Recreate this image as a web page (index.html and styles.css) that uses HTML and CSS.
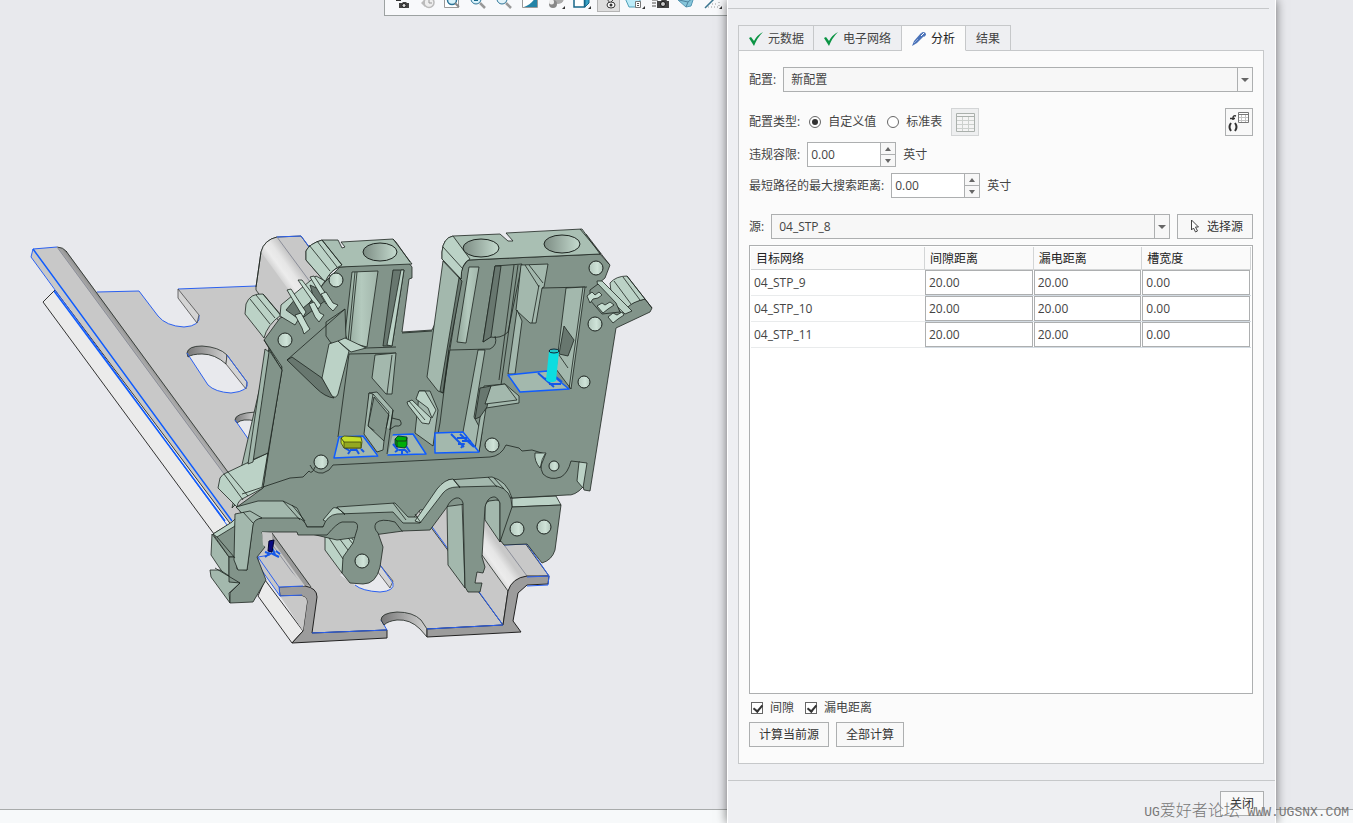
FILE: index.html
```html
<!DOCTYPE html>
<html lang="zh-CN">

<head>
    <meta charset="UTF-8">
    <meta name="viewport" content="width=device-width, initial-scale=1.0">
    <title>分析</title>
    <link rel="stylesheet" href="styles.css">
</head>

<body>
    <main class="canvas">
        <div class="toolbar">
            <button class="tool" aria-label="视图管理器"><svg viewBox="0 0 26 12"><path d="M6 0h5v1H6z" fill="#333"/><path d="M9 3h3l1-1h3l1 1h2v5H9z" fill="#444"/><circle cx="14" cy="5.500" r="2" fill="#ddd" stroke="#222"/></svg></button>
            <button class="tool" aria-label="上一视图"><svg viewBox="0 0 26 12"><circle cx="13" cy="2.500" r="5" fill="#eee" stroke="#bbb" stroke-width="1.500"/><path d="M13 0v3h3" fill="none" stroke="#999"/><path d="M5 3l4-4v8z" fill="#bbb"/></svg></button>
            <button class="tool" aria-label="重新调整"><svg viewBox="0 0 26 12"><path d="M2.500 0v7.500h14V0" fill="#fff" stroke="#999"/><circle cx="10" cy="0" r="4.500" fill="#d9f2fa" stroke="#2b7397" stroke-width="1.500"/><path d="M13 3l4 4" stroke="#888" stroke-width="2"/></svg></button>
            <button class="tool" aria-label="放大"><svg viewBox="0 0 26 12"><circle cx="8" cy="-1" r="5" fill="#d9f2fa" stroke="#2b7397" stroke-width="1"/><path d="M6 0h4" stroke="#176789" stroke-width="2"/><path d="M12 3l5 5" stroke="#999" stroke-width="2.500"/></svg></button>
            <button class="tool" aria-label="缩小"><svg viewBox="0 0 26 12"><circle cx="8" cy="-1" r="5" fill="#e3f4fa" stroke="#2b7397" stroke-width="1"/><path d="M12 3l5 5" stroke="#999" stroke-width="2.500"/></svg></button>
            <button class="tool" aria-label="重画"><svg viewBox="0 0 26 12"><path d="M2.500-6.500h15v14h-15z" fill="#fff" stroke="#999"/><path d="M17-6v13H4q9-3 13-13" fill="#2383a6"/></svg></button>
            <button class="tool" aria-label="着色"><svg viewBox="0 0 26 12"><circle cx="12" cy="-2" r="6" fill="#aaa"/><circle cx="7" cy="4" r="4" fill="#888"/><circle cx="5.500" cy="2" r="2.500" fill="#eee"/><path d="M16 9h3V6z" fill="#333"/></svg></button>
            <button class="tool" aria-label="显示样式"><svg viewBox="0 0 26 12"><path d="M3-4h9.500V7H2V-4" fill="#fff" stroke="#176789" stroke-width="1.500"/><path d="M13-4h4V3l-4 4z" fill="#38a2c5" stroke="#176789"/><path d="M16 9h3V6z" fill="#333"/></svg></button>
            <button class="tool pressed" aria-label="注释显示"><svg viewBox="0 0 26 12"><path d="M11-1l3 4M18-1l-3 3" stroke="#444"/><ellipse cx="15" cy="5" rx="4" ry="3" fill="#fff" stroke="#333"/><circle cx="15" cy="5" r="1.500" fill="#333"/></svg></button>
            <button class="tool" aria-label="外观"><svg viewBox="0 0 26 12"><path d="M1-2h15v5l-4 4H5z" fill="#bcecf9" stroke="#4e9eb8"/><path d="M11.500 1.500h5v6h-5z" fill="#fff" stroke="#777"/><path d="M13 3.500h2M13 5.500h2" stroke="#555"/><path d="M18 9h3V6z" fill="#333"/></svg></button>
            <button class="tool" aria-label="捕获"><svg viewBox="0 0 26 12"><path d="M2 0h6M2 3h4M2 6h4" stroke="#888" stroke-width="1.500"/><path d="M7 1h4l1-2h4l1 2h2v7H7z" fill="#444"/><circle cx="13" cy="4" r="2.500" fill="#ccc" stroke="#111"/></svg></button>
            <button class="tool" aria-label="截面"><svg viewBox="0 0 26 12"><path d="M2 0l8-3h8l-3 9-5 1z" fill="#86c5da" stroke="#5599b5"/><path d="M3 0l9 2 6-5M12 2l-2 5" stroke="#4d839e" fill="none"/></svg></button>
            <button class="tool" aria-label="基准显示"><svg viewBox="0 0 26 12"><path d="M3 8L14-3" stroke="#39758f" stroke-width="1.500"/><path d="M6 7h11V-2M10 4h6" stroke="#999" fill="none" stroke-dasharray="1 2"/><path d="M17 9h3V6z" fill="#333"/></svg></button>
        </div>

        <svg class="model" viewBox="0 16 727 793" preserveAspectRatio="xMinYMin meet" role="img" aria-label="端子模型">
            <defs>
                <linearGradient id="fillet" gradientUnits="userSpaceOnUse" x1="260" y1="253" x2="278" y2="240">
                    <stop offset="0" stop-color="#cfcfcf"/><stop offset="0.350" stop-color="#ececec"/><stop offset="0.650" stop-color="#e6e6e6"/><stop offset="1" stop-color="#c8c8c8"/>
                </linearGradient>
                <linearGradient id="edge" gradientUnits="userSpaceOnUse" x1="57" y1="252" x2="65" y2="246">
                    <stop offset="0" stop-color="#b8b8b8"/><stop offset="1" stop-color="#858585"/>
                </linearGradient>
                <linearGradient id="hole" x1="0" x2="1">
                    <stop offset="0" stop-color="#7d8d84"/><stop offset="1" stop-color="#c5dbcf"/>
                </linearGradient>
                <linearGradient id="peg" x1="0" x2="1">
                    <stop offset="0" stop-color="#b3c8bd"/><stop offset="0.600" stop-color="#cfe3d8"/><stop offset="1" stop-color="#b0c5ba"/>
                </linearGradient>
                <linearGradient id="wall" x1="0" x2="1">
                    <stop offset="0" stop-color="#777"/><stop offset="1" stop-color="#d2d2d2"/>
                </linearGradient>
                <linearGradient id="bore" x1="0" x2="1">
                    <stop offset="0" stop-color="#91a69a"/><stop offset="0.500" stop-color="#b4cabe"/><stop offset="1" stop-color="#a1b5aa"/>
                </linearGradient>
            </defs>

            <!-- rail: base plate -->
            <path class="plate" d="M97 292L139 291L158 316Q166 326 184 327Q201 326 199 315L178 289L256 286L420 506L503 625L427 629L421 620Q413 612 397 612Q381 613 381 620L387 630L312 633L225 525L66 315Z"/>
            <path class="blue" d="M97 292L139 291L158 316Q166 326 184 327Q201 326 199 315M178 289L256 286M430 524L503 625L427 629M387 630L312 633M381 620L387 630"/>
            <path class="rim" d="M178 289L199 315L197 323L178 298Z"/>
            <path class="gap" d="M187 353Q188 346 202 346Q219 347 227 355L247 382Q250 391 231 393Q215 392 208 385Z"/>
            <path class="ink" fill="url(#wall)" d="M187 353Q188 346 202 346Q219 347 227 355L226 364Q215 354 202 354Q192 354 188 357Z"/>
            <path class="rim" d="M227 355L247 382L246 389L226 364Z"/>
            <path class="blue" d="M187 353L208 385Q215 392 231 393Q250 391 247 382L227 355"/>
            <path class="gap" d="M235 420Q235 413 253 412L258 440L249 440Z"/>
            <path class="ink" fill="url(#wall)" d="M235 420Q235 413 256 412V421Q242 418 237 423Z"/>
            <path class="blue" d="M235 420L249 440"/>
            <path class="gap" d="M340 575L370 560L380 565L393 583Q395 591 380 592Q362 591 355 585Z"/>
            <path class="rim" d="M374 567L380 565L393 581L390 588Z"/>
            <path class="blue" d="M380 565L393 583Q395 591 380 592Q362 591 355 585"/>
            <path class="ink" fill="url(#wall)" d="M381 620Q381 613 397 612Q413 612 421 620L427 629V637L420 629Q410 619 397 620Q388 621 384 625Z"/>

            <!-- rail: left flange -->
            <path class="pale" d="M43 302L55 290L232 526L214 534Z"/>
            <path class="pale" d="M258 596L265 580L303 631L292 643Z"/>
            <path class="flange" d="M33 249L57 247Q63 247 67 252L308 584L305 586L279 587L31 257Z"/>
            <path fill="url(#edge)" d="M57 247Q63 247 67 252L236 483L228 480Z"/>
            <path class="shade" d="M268 535L272 533L310 585L305 586Z"/>
            <path class="ink-line" d="M57 247Q63 247 67 252M66 251L236 483M272 533L311 587"/>
            <path class="soft" d="M57 247L230 482M266 536L303 587"/>
            <path class="blue" d="M57 247L33 249L31 257L227 525"/>
            <path class="blue bold" d="M33 249L232 521M54 291L225 521"/>
            <path class="front" d="M279 587L305 586Q317 588 317 597L312 633L387 630V638L292 643L303 631L307 602Q307 597 302 596H280Z"/>
            <path class="flange" d="M280 596H302Q307 597 307 602L303 631Z"/>
            <path class="flange" d="M258 557L273 553L305 586L279 587L280 596L258 564Z"/>
            <path class="blue" d="M258 557L279 587L303 586M279 587L280 596M258 557V565L280 596L302 595M258 557L270 555M312 633L387 630"/>

            <!-- rail: right flange -->
            <path class="flange ink" d="M256 287L261 252Q264 240 277 237L301 236L549 576L527 577L508 591L503 625L256 290Z"/>
            <path fill="url(#fillet)" d="M261 252Q264 240 277 237L527 576Q512 580 508 591Z"/>
            <path class="soft" d="M277 237L527 576"/>
            <path class="ink-line" d="M256 287L261 252Q264 240 277 237M482 555L508 591"/>
            <path class="blue" d="M277 237L301 236L310 248M430 524L503 625"/>
            <path class="front" d="M549 576L548 584L527 585L518 593L513 621L521 632L427 637V629L503 625L508 591Q512 578 527 576Z"/>
            <path class="blue" d="M504 545L527 544L549 576L548 585L527 586M549 576L527 577M427 629L503 625"/>

            <!-- foot: rear surfaces -->
            <path class="light" d="M512 498L556 496L561 505L512 507Z"/>
            <path class="body" d="M500 504L512 507L561 505L555 550Q552 560 542 563L527 544L504 545L500 540Z"/>
            <path class="mid" d="M447 507Q452 497 462 501L465 588L448 565Z"/>
            <path class="mid" d="M485 520V505Q490 496 500 501V542Z"/>
            <path class="light" d="M325 535L340 521L360 523L356 540L345 558L342 573L325 550Z"/>
            <path class="ink-line" d="M337 524L353 544M333 530L348 550M329 538L343 559M342 522L353 540M348 522L356 533"/>

            <!-- main body -->
            <path class="mid" d="M269 348L276 352L282 367L240 500L232 508Z"/>
            <path class="body" d="M264 340L280 318L302 310L325 282L340 267L408 262L412 267L412 278L409 279L402 332L432 330L462 268L468 260L600 254L610 265L605 278L598 284L622 314Q625 303 645 299L652 308L650 312L616 328L590 491L584 490L583 487Q575 496 567 495L512 498L420 510L403 531L337 540L265 523L237 507L263 488L282 367Z"/>
            <path class="light" d="M220 478Q222 474 228 472L268 453L263 488L244 498Q238 500 237 507L218 488Z"/>
            <path class="ink-line" d="M224 474L243 500M228 472L248 496M237 507L242 514M242 494L290 478L303 477L309 471Q312 475 315 467L325 458M262 487L282 370L264 340"/>
            <path class="body" d="M252 460L268 453L282 370L269 350Z"/>
            <path class="mid" d="M265 349L269 352L253 462L248 464Z"/>

            <!-- foot bracket -->
            <path class="mid" d="M236 507L258 501H283L297 508L307 527L323 527L337 507L395 503L408 517H421L448 480L492 477Q507 481 512 498L497 490L457 490L420 528L403 526L393 514L337 517L323 530H307L298 520H262L252 524Z"/>
            <path class="light" d="M323 520L333 508Q336 506 345 514L331 524Z"/>
            <path class="light" d="M415 521L437 489Q445 479 453 479L460 487Q449 489 443 495L421 523Z"/>
            <path class="mid" d="M212 534L229 557V582L211 555Z"/>
            <path class="mid" d="M210 570H220L240 583L229 593L230 603L211 577Z"/>
            <path class="body" d="M213 534L236 520V557H229Z"/>
            <path class="light" d="M213 534L232 522L236 518L235 526L217 537Z"/>
            <path class="body" d="M247 570L253 523Q256 518 262 518H298Q304 519 307 527H323Q327 515 337 514L393 512L403 523H420L443 493Q448 487 457 487L497 486Q512 490 512 507L500 542V503Q497 496 493 497Q487 498 485 507L482 557L485 567L483 573L477 572L475 583L482 583L480 592H468L465 587L463 503Q461 497 456 498Q450 500 447 507L430 530L402 531L395 522Q381 518 376 523Q373 528 378 533L383 547L380 567Q376 584 363 584L350 583L342 573L343 557L353 543L356 533Q360 523 354 522H342Q337 523 327 535H298L297 532H262L265 547L257 557L266 580L253 602L230 603V593L240 583L229 582V557L236 557L237 569Z"/>
            <path class="mid" d="M235 514L250 511L262 518Q254 519 253 525L247 570H238L234 560Z"/>
            <path class="ink-line" d="M217 537L235 558M215 568L240 583M283 501L300 520M292 505L305 521M337 507L345 515M393 503L406 520M453 479L460 488M488 477L497 487M494 478L504 489M415 514L421 523M243 512L253 523"/>
            <path class="flange" d="M262 532L272 533L273 553L263 545Z"/>

            <!-- left tower -->
            <path class="top" d="M306 251Q309 244 322 240L338 240L342 248L345 247L341 242L393 239L412 264L340 267Q330 270 325 282L306 260Z"/>
            <path class="light" d="M306 251Q309 244 322 240L342 265Q330 270 325 282L306 260Z"/>
            <path class="ink-line" d="M309 245L330 271M317 241L337 267M322 240L342 265M393 239L396 242L410 262"/>
            <path class="light" d="M246 304Q250 293 263 294L281 315Q267 325 264 338L245 314Z"/>
            <path class="ink-line" d="M250 299L270 324M256 295L275 318M263 294L282 317"/>
            <path class="light" d="M281 305L316 276L325 281L303 312L295 325L280 316Z"/>
            <path class="deep" d="M286 310L296 298L303 308L314 299L310 285L325 292L326 300L300 320Z"/>
            <path class="pin" d="M287 290l4-1 15 23-3 5zM298 280l4 0 19 25-3 4zM310 277l4-1 16 24-4 4z"/>
            <path class="pin" d="M295 315l6-2 7 13 2 3-6 5-2-6zM309 304l5-2 6 11 4 2-5 7-4-5zM321 294l5-2 7 11 5 2-5 6-5-5z"/>
            <path class="bore" d="M352 272L378 271L367 347L348 342L345 334Z"/>
            <path class="ink-line" d="M355 272L348 342M357 272L350 343"/>
            <path class="deep" d="M393 270L404 270L392 346L383 346Z"/>
            <path class="light" d="M401 270L404 270L392 346L387 345Z"/>
            <path class="body" d="M326 322L345 309L346 338Q340 346 331 343L326 336Z"/>
            <path class="deep" d="M287 360L292 357L322 378L334 398Q325 397 316 388Z"/>
            <path class="light" d="M329 344L338 341L349 351L338 394Q336 399 332 396L322 378Z"/>
            <path class="light" d="M338 341L345 338L366 348L351 352Z"/>
            <path class="ink-line" d="M366 348L396 347M349 354L396 353M349 354L338 437M287 360L345 309"/>
            <path class="mid" d="M375 355L396 353L392 394L386 394L372 378Z"/>
            <path class="ink-line" d="M392 355L387 394"/>
            <path class="mid" d="M369 393L377 392L393 410L388 440L380 448L366 433Z"/>
            <path class="body" d="M374 397L389 415L384 438L368 426Z"/>
            <path class="ink-line" d="M392 418L400 420Q404 427 395 426L389 430"/>
            <path class="mid" d="M419 391L430 391L438 410L433 446L415 433L418 405Z"/>
            <path class="light" d="M407 402L412 400L431 418L429 424L422 423L408 405ZM419 391L425 391L436 410L432 418L428 408L416 399Z"/>
            <path class="ink-line" d="M409 401L425 420"/>

            <!-- right tower -->
            <path class="top" d="M442 252Q443 238 453 236L500 234L508 241H513L506 233L582 229L600 254L468 260Q461 263 461 279L442 259Z"/>
            <path class="light" d="M442 252Q443 238 453 236L470 259Q461 263 461 279L442 259Z"/>
            <path class="ink-line" d="M443 247L463 269M580 229L601 254M586 234L609 264"/>
            <path class="mid" d="M443 261L461 280L443 393L438 391L427 377Z"/>
            <path class="deep" d="M459 278L462 281L449 349L443 393L440 391Z"/>
            <path class="bore" d="M469 267L479 267L466 343L457 342Z"/>
            <path class="body" d="M495 266L522 264L508 332Q501 339 490 337L483 342Z"/>
            <path class="deep" d="M495 266L501 266L491 337L483 342Z"/>
            <path class="ink-line" d="M518 265L500 392M514 265L499 380M450 350L490 349Q498 345 495 336"/>
            <path class="mid" d="M521 265L548 264L544 287L542 288L536 323H530L516 310Z"/>
            <path class="ink-line" d="M525 265L539 287M529 265L543 283M539 285L532 323M542 288L587 287"/>
            <path class="mid" d="M566 288L585 287L571 389L556 369Z"/>
            <path class="deep" d="M564 326L574 340L568 356L559 354Z"/>
            <path class="ink-line" d="M583 287L569 389M559 355L568 368"/>
            <path class="mid" d="M517 310L522 321L515 374H508Z"/>
            <path class="mid" d="M478 350L485 350L474 417L482 432L479 452L463 432Z"/>
            <path class="mid" d="M484 386L505 384L519 396V403L486 408L479 452L475 449L482 405Z"/>
            <path class="deep" d="M480 388L491 386L487 407L480 417L475 419Z"/>
            <path class="mid" d="M491 386L505 384L517 400L485 404Z"/>
            <path class="ink-line" d="M449 350L440 423L435 450M402 333L432 331"/>

            <!-- right clip -->
            <path class="light" d="M610 283Q616 276 627 276L645 299Q632 302 627 308L622 314L612 300Z"/>
            <path class="ink-line" d="M614 281L631 304M623 277L640 300M627 276L645 299L652 308"/>
            <path class="light" d="M597 281L602 281L632 311L625 314L598 288Z"/>
            <path class="body" d="M590 290L598 284L616 303L620 312L602 314L590 300Z"/>
            <path class="pin" d="M587 296l5-4 3 3 4-3 3 3-4 3-5 1-3 4zM597 306l5-3 3 2 5-3 4 3-6 4-5 4zM608 317l5-4 4 2 5-3 2 3-6 4-5 4z"/>

            <!-- contact pads -->
            <path class="pad" d="M339 437L363 436L378 456L334 458Z"/>
            <path class="pad" d="M390 435L413 434L426 454L387 455Z"/>
            <path class="pad" d="M435 433L463 432L479 452L435 453Z"/>
            <path class="pad" d="M508 375L547 371L569 389L520 392Z"/>
            <path class="body plain" d="M366 432L388 428L393 434L387 457H379Z"/>
            <path class="mid" d="M369 393L373 394L368 426L384 441L383 450L377 452L364 434Z"/>
            <path class="ink-line" d="M393 410L387 454M373 394L389 412L384 441"/>
            <path class="marks" d="M345 448l5 3-2 3M350 450h6M356 449l3 5M361 449l3 3"/>
            <path class="marks" d="M393 444l5 6-3 2M399 450h6l3 3M406 446l4 6M402 449v5"/>
            <path class="marks" d="M451 434l13 13M460 434l14 13M457 438h10M462 441h9M458 444h6l-3 4"/>
            <path class="marks" d="M538 373l16 14M546 379h10M549 384h12M556 377l6 5M543 378l7 2"/>
            <path class="marks" d="M265 552l6 2M271 553l8 4M272 548l3 6M276 551l4 3M265 557l4-3"/>
            <path class="yellow" d="M341 438L344 436L361 437L362 442L361 448H344L341 443Z"/>
            <path class="yellow dark" d="M344 442H361V448H344Z"/>
            <path class="ink-line" d="M341 438L344 442"/>
            <path class="green" d="M395 439L398 436L407 437V445L405 448L397 447L395 444Z"/>
            <path class="ink-line" d="M395 439L397 441H406L407 438M397 441V447"/>
            <path class="cyan" d="M549 351H559L556 381Q550 384 546 380Z"/>
            <ellipse class="cyan-top" cx="554" cy="351" rx="5" ry="2"/>
            <path class="navy" d="M269 541L274 540L272 552L268 551Z"/>

            <!-- lower edge of the housing -->
            <path class="ink-line" d="M310 465Q314 474 323 473Q330 471 333 465L490 457Q501 456 506 445L519 448L522 451L532 450L545 454"/>
            <path class="light" d="M535 453L546 453L542 463L540 468Q534 461 535 453Z"/>
            <path class="ink-line" d="M545 454Q538 465 543 474Q550 481 561 477Q568 473 571 461L580 462"/>
            <path class="light" d="M579 462L587 463L583 488L577 481Z"/>

            <!-- bores -->
            <g class="bores">
                <ellipse cx="380" cy="252" rx="17" ry="9"/>
                <ellipse cx="481" cy="248" rx="18" ry="9"/>
                <ellipse cx="562" cy="244" rx="18" ry="9"/>
                <circle cx="336" cy="280" r="7"/>
                <circle cx="285" cy="340" r="7"/>
                <circle cx="321" cy="462" r="7"/>
                <circle cx="596" cy="268" r="7"/>
                <circle cx="595" cy="324" r="7"/>
                <circle cx="584" cy="382" r="6"/>
                <circle cx="492" cy="445" r="7"/>
                <circle cx="554" cy="466" r="5"/>
                <circle cx="362" cy="561" r="7"/>
                <circle cx="517" cy="529" r="7"/>
                <circle cx="544" cy="527" r="7"/>
            </g>
        </svg>
    </main>

    <footer class="statusbar"></footer>

    <section class="dialog">
        <div class="tabs" role="tablist">
            <button class="tab" role="tab"><svg class="tab-icon" viewBox="0 0 14 14"><path d="M0 6l2-1 3 4Q8 3 14 0 8 6 5 14z" fill="#0b9444"/></svg>元数据</button>
            <button class="tab" role="tab"><svg class="tab-icon" viewBox="0 0 14 14"><path d="M0 6l2-1 3 4Q8 3 14 0 8 6 5 14z" fill="#0b9444"/></svg>电子网络</button>
            <button class="tab active" role="tab" aria-selected="true"><svg class="tab-icon" viewBox="0 0 14 14"><path d="M0 14l2-5L9 1l3 3-7 7z" fill="#4a72b8"/><path d="M9 1l2-1q3 0 3 3l-2 2z" fill="#4a72b8"/><path d="M9 4l3-3" stroke="#fff"/><path d="M2 11l4-4" stroke="#8ca8d8"/></svg>分析</button>
            <button class="tab" role="tab">结果</button>
        </div>

        <div class="panel">
            <div class="row">
                <label for="config">配置:</label>
                <div class="dropdown">
                    <select id="config"><option>新配置</option></select>
                </div>
            </div>

            <div class="row type-row">
                <span class="type-label">配置类型:</span>
                <input type="radio" name="type" id="custom" checked>
                <label for="custom">自定义值</label>
                <input type="radio" name="type" id="standard">
                <label for="standard">标准表</label>
                <button class="icon-button disabled" disabled aria-label="表"><svg viewBox="0 0 26 26"><path d="M4.500 4.500h18v18h-18z" fill="#f4f4f4" stroke="#aab0ac"/><path d="M5 7.500h17" stroke="#aab0ac"/><path d="M5 11.500h17M5 15.500h17M5 19.500h17M10.500 8v14M16.500 8v14" stroke="#ccd0cd"/></svg></button>
                <button class="icon-button formula" aria-label="公式"><svg viewBox="0 0 26 26"><path d="M12.500 3.500h10v10h-10z" fill="#fff" stroke="#777"/><path d="M13 5.500h9" stroke="#777"/><path d="M13 8.500h9M13 11.500h9M15.500 6v7M19.500 6v7" stroke="#c4c4c4"/><path d="M10 7q-3-1-3 2v2M4 9.500h5" stroke="#333" stroke-width="1.500" fill="none"/><path d="M5 14q-3 4 0 8M9 14q3 4 0 8" stroke="#333" stroke-width="2" fill="none"/></svg></button>
            </div>

            <div class="row">
                <label for="tolerance">违规容限:</label>
                <div class="spinner">
                    <input type="text" id="tolerance" value="0.00">
                    <div class="arrows"><button class="up" aria-label="增加"></button><button class="down" aria-label="减少"></button></div>
                </div>
                <span>英寸</span>
            </div>

            <div class="row distance-row">
                <label for="distance">最短路径的最大搜索距离:</label>
                <div class="spinner">
                    <input type="text" id="distance" value="0.00">
                    <div class="arrows"><button class="up" aria-label="增加"></button><button class="down" aria-label="减少"></button></div>
                </div>
                <span>英寸</span>
            </div>

            <div class="row source-row">
                <label for="source">源:</label>
                <div class="dropdown">
                    <select id="source"><option>04_STP_8</option></select>
                </div>
                <button class="button pick"><svg viewBox="0 0 10 15"><path d="M1.500 1v10l2-2 2 4 2-1-2-4h3z" fill="#fff" stroke="#444"/></svg>选择源</button>
            </div>

            <div class="table-box">
                <table>
                    <thead>
                        <tr><th class="net">目标网络</th><th>间隙距离</th><th>漏电距离</th><th>槽宽度</th></tr>
                    </thead>
                    <tbody>
                        <tr>
                            <td>04_STP_9</td>
                            <td><input type="text" value="20.00" aria-label="间隙距离"></td>
                            <td><input type="text" value="20.00" aria-label="漏电距离"></td>
                            <td><input type="text" value="0.00" aria-label="槽宽度"></td>
                        </tr>
                        <tr>
                            <td>04_STP_10</td>
                            <td><input type="text" value="20.00" aria-label="间隙距离"></td>
                            <td><input type="text" value="20.00" aria-label="漏电距离"></td>
                            <td><input type="text" value="0.00" aria-label="槽宽度"></td>
                        </tr>
                        <tr>
                            <td>04_STP_11</td>
                            <td><input type="text" value="20.00" aria-label="间隙距离"></td>
                            <td><input type="text" value="20.00" aria-label="漏电距离"></td>
                            <td><input type="text" value="0.00" aria-label="槽宽度"></td>
                        </tr>
                    </tbody>
                </table>
            </div>

            <div class="checks">
                <input type="checkbox" id="clearance" checked>
                <label for="clearance">间隙</label>
                <input type="checkbox" id="creepage" checked>
                <label for="creepage">漏电距离</label>
            </div>

            <div class="actions">
                <button class="button">计算当前源</button>
                <button class="button">全部计算</button>
            </div>
        </div>

        <div class="dialog-footer">
            <button class="button">关闭</button>
        </div>
    </section>

    <div class="watermark">UG<span>爱好者论坛</span> WWW.UGSNX.COM</div>
</body>

</html>
```
FILE: styles.css
```css
* {
    box-sizing: border-box;
}

body {
    margin: 0;
    height: 100vh;
    display: grid;
    grid-template-columns: minmax(0, 1fr) 549px 77px;
    grid-template-rows: minmax(0, 1fr) 14px;
    overflow: hidden;
    background-color: #e8e9ed;
    color: #444;
    font-family: "Open Sans", "Noto Sans CJK SC", sans-serif;
    font-size: 12px;
    line-height: 16px;
}

button,
input,
select {
    margin: 0;
    padding: 0;
    font: inherit;
    color: inherit;
}

/* 3D view */
.canvas {
    grid-area: 1 / 1;
    display: flex;
    flex-direction: column;
    min-height: 0;
}

.toolbar {
    align-self: flex-end;
    display: flex;
    width: 343px;
    height: 16px;
    padding-left: 5px;
    border: solid #9da2a2;
    border-width: 0 0 1px 1px;
    background-color: #f8f9fb;
    overflow: hidden;
}

.tool {
    flex: 0 0 26px;
    height: 12px;
    border: none;
    background: none;
}

.tool svg {
    display: block;
    width: 26px;
    height: 12px;
}

.tool.pressed {
    flex-basis: 23px;
    margin: 0 3px 0 -1px;
    border: 1px solid #b4b4b4;
    border-top: none;
    background-color: #dedede;
    overflow: hidden;
}

.tool.pressed + .tool {
    margin-left: 1px;
}

.tool.pressed svg {
    margin-left: -2px;
}

.model {
    flex: 1;
    width: 100%;
    min-height: 0;
}

.model path,
.model ellipse,
.model circle {
    stroke-linejoin: round;
}

.plate,
.flange {
    fill: #c8c8c8;
}

.pale {
    fill: #ebebeb;
    stroke: #333;
    stroke-width: 1;
}

.front {
    fill: #9c9c9c;
    stroke: #222;
}

.shade {
    fill: #9a9a9a;
}

.gap {
    fill: #e8e9ed;
}

.rim {
    fill: #d4d4d4;
    stroke: #333;
    stroke-width: 0.7;
}

.ink,
.ink-line {
    stroke: #1d2420;
    stroke-width: 0.8;
}

.ink-line,
.soft,
.blue,
.marks {
    fill: none;
}

.soft {
    stroke: #8b8e99;
}

.blue {
    stroke: #2b60f0;
}

.blue.bold {
    stroke: #0f5cff;
    stroke-width: 1.5;
}

.marks {
    stroke: #1458e8;
    stroke-width: 2;
}

.body,
.mid,
.light,
.top,
.deep,
.bore,
.pin {
    stroke: #1d2420;
    stroke-width: 0.8;
}

.body {
    fill: #82948a;
}

.body.plain {
    stroke: none;
}

.mid {
    fill: #a3b8ad;
}

.light {
    fill: #bbd2c6;
}

.top {
    fill: #a9bfb3;
}

.deep {
    fill: #68776f;
}

.bore {
    fill: url(#bore);
}

.pin {
    fill: #c6ddd1;
}

.pad {
    fill: #a3b8ad;
    stroke: #0f5cff;
    stroke-width: 1.5;
}

.yellow {
    fill: #c5de2c;
    stroke: #3c440c;
    stroke-width: 0.8;
}

.yellow.dark {
    fill: #94a821;
}

.green {
    fill: #00ad08;
    stroke: #023;
    stroke-width: 0.8;
}

.cyan {
    fill: #0cdde0;
}

.cyan-top {
    fill: #20c6c8;
    stroke: #123;
}

.navy {
    fill: #0a0a80;
    stroke: #003;
}

.bores * {
    fill: url(#hole);
    stroke: #1d2420;
}

.bores circle {
    fill: url(#peg);
}

.statusbar {
    grid-area: 2 / 1 / 3 / 4;
    border-top: 1px solid #a8abab;
    background-color: #f7f9fa;
}

/* dialog */
.dialog {
    grid-area: 1 / 2 / 3 / 3;
    position: relative;
    display: flex;
    flex-direction: column;
    padding-top: 8px;
    border: solid #fff;
    border-width: 0 1px;
    background-color: #eeeff2;
    box-shadow: 0 0 10px rgba(0, 0, 0, 0.55);
}

.dialog::before {
    content: "";
    height: 1px;
    margin-right: 6px;
    background-color: #c6c8ca;
}

.tabs {
    display: flex;
    height: 26px;
    margin: 16px 11px -1px 10px;
    position: relative;
}

.tab {
    display: flex;
    align-items: center;
    gap: 5px;
    height: 26px;
    padding: 2px 10px 0;
    border: 1px solid #c6c8ca;
    border-left: none;
    background-color: #eeeff2;
    white-space: nowrap;
}

.tab:first-child {
    padding-right: 9px;
    border-left: 1px solid #c6c8ca;
}

.tab.active {
    border-bottom-color: #fbfbfb;
    background-color: #fbfbfb;
    color: #222;
}

.tab-icon {
    width: 14px;
    height: 14px;
}

.panel {
    flex: 1;
    min-height: 0;
    display: flex;
    flex-direction: column;
    margin: 0 11px 16px 10px;
    padding: 16px 10px;
    border: 1px solid #c6c8ca;
    background-color: #fbfbfb;
}

.row {
    display: flex;
    align-items: center;
    gap: 7px;
    white-space: nowrap;
}

.dropdown {
    position: relative;
    flex: 1;
    height: 25px;
}

.dropdown select {
    width: 100%;
    height: 25px;
    padding: 0 20px 0 7px;
    border: 1px solid #adafb0;
    border-radius: 0;
    background-color: #f7f7f7;
    appearance: none;
}

.dropdown::before {
    content: "";
    position: absolute;
    top: 0;
    right: 15px;
    width: 1px;
    height: 100%;
    background-color: #adafb0;
}

.dropdown::after {
    content: "";
    position: absolute;
    top: 11px;
    right: 4px;
    border: solid transparent;
    border-width: 4px 4px 0;
    border-top-color: #666;
    pointer-events: none;
}

.type-row {
    margin: 16px 0 6px;
}

.type-label {
    margin-right: 2px;
}

input[type="radio"],
input[type="checkbox"] {
    position: relative;
    width: 12px;
    height: 12px;
    border: 1px solid #666;
    background-color: #fff;
    appearance: none;
}

input[type="radio"] {
    border-radius: 50%;
}

label + input[type="radio"] {
    margin-left: 4px;
}

input[type="radio"]:checked::before {
    content: "";
    position: absolute;
    inset: 2px;
    border-radius: 50%;
    background-color: #333;
}

input[type="checkbox"]:checked::before {
    content: "";
    position: absolute;
    top: 0;
    left: 3px;
    width: 4px;
    height: 7px;
    border: solid #333;
    border-width: 0 2px 2px 0;
    transform: rotate(40deg);
}

.icon-button {
    width: 28px;
    height: 28px;
    margin-left: 2px;
    border: 1px solid #adafb0;
    background-color: #f8f8f8;
}

.icon-button svg {
    display: block;
    width: 26px;
    height: 26px;
}

.icon-button.disabled {
    border-color: #d3d5d6;
    background-color: #eeeff0;
}

.icon-button.formula {
    margin-left: auto;
}

.spinner {
    display: flex;
    width: 89px;
    height: 25px;
    border: 1px solid #adafb0;
    background-color: #fff;
}

.spinner input {
    flex: 1;
    min-width: 0;
    padding-left: 3px;
    border: none;
    background: none;
}

.arrows {
    display: flex;
    flex-direction: column;
    width: 15px;
    border-left: 1px solid #adafb0;
}

.arrows button {
    flex: 1;
    display: flex;
    align-items: center;
    justify-content: center;
    border: none;
    background-color: #f7f7f7;
}

.arrows .down {
    border-top: 1px solid #adafb0;
}

.arrows button::before {
    content: "";
    border: solid transparent;
    border-width: 0 3px 4px;
    border-bottom-color: #666;
}

.arrows .down::before {
    border-width: 4px 3px 0;
    border-top-color: #666;
}

.distance-row {
    margin-top: 6px;
}

.source-row {
    margin: 16px 0 6px;
}

.button {
    height: 25px;
    padding: 0 9px;
    border: 1px solid #adafb0;
    background-color: #f8f8f8;
    color: #333;
    white-space: nowrap;
}

.pick {
    display: flex;
    align-items: center;
    gap: 7px;
    padding-left: 12px;
}

.pick svg {
    width: 10px;
    height: 15px;
}

.table-box {
    flex: 1;
    min-height: 0;
    padding: 1px;
    border: 1px solid #adafb0;
    background-color: #fff;
}

table {
    width: 100%;
    table-layout: fixed;
    border-collapse: separate;
    border-spacing: 0;
}

th {
    height: 23px;
    padding: 2px 5px 0;
    border: solid #d3d5d6;
    border-width: 0 1px 1px 0;
    background-color: #fafafa;
    color: #222;
    font-weight: normal;
    text-align: left;
}

th.net {
    width: 174px;
}

td {
    height: 26px;
    padding: 0 0 0 3px;
    border-bottom: 1px solid #e9ebec;
}

td + td {
    padding: 0 1px 0 0;
    border-bottom-color: #d3dbe2;
}

td input {
    display: block;
    width: 100%;
    height: 25px;
    padding-left: 3px;
    border: 1px solid #adafb0;
    background-color: #fff;
}

.checks {
    display: flex;
    align-items: center;
    gap: 7px;
    margin: 6px 2px;
}

.checks label + input {
    margin-left: 4px;
}

.actions {
    display: flex;
    gap: 7px;
}

.dialog-footer {
    display: flex;
    justify-content: flex-end;
    padding: 10px 11px 7px;
    border-top: 1px solid #c6c8ca;
}

/* forum mark over the bottom corner */
.watermark {
    position: absolute;
    right: 4px;
    bottom: 2px;
    color: #777;
    font-family: "Liberation Mono", "Noto Sans CJK SC", monospace;
    font-size: 13px;
    white-space: pre;
}

.watermark span {
    font-size: 16px;
    font-weight: 300;
}
```
